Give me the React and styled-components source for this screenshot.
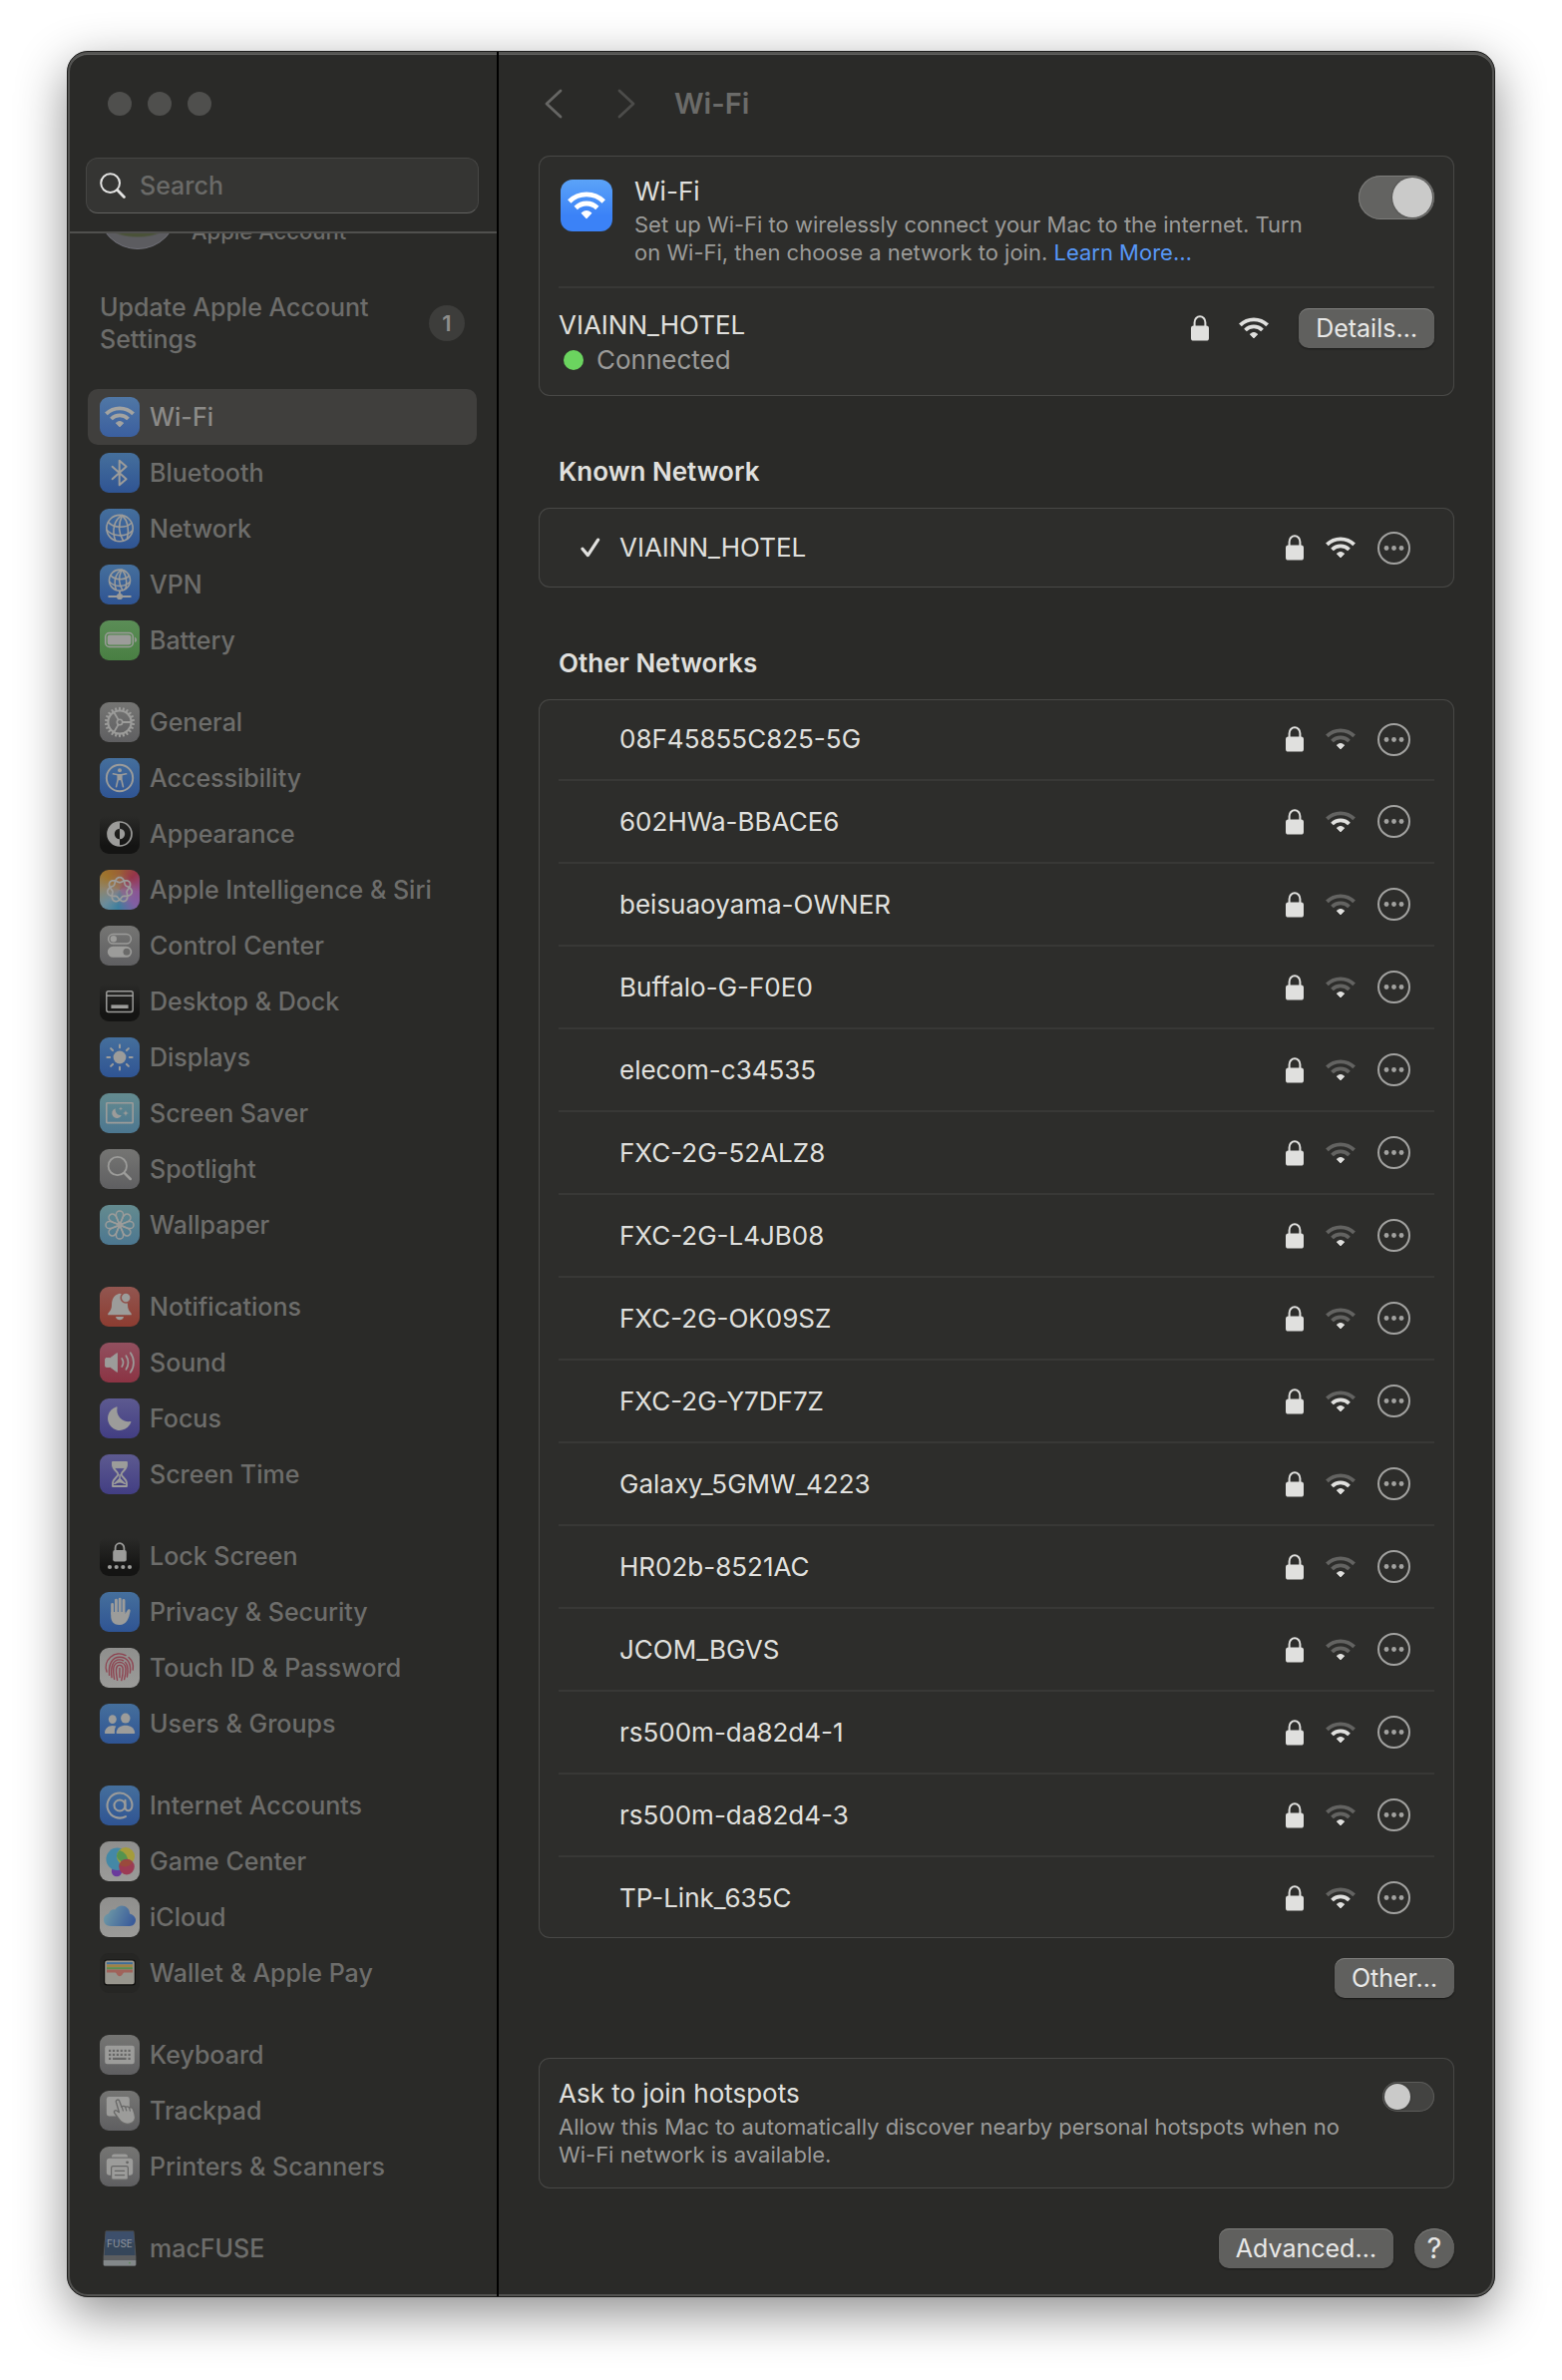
import React, { useState } from "react";
import styled, { createGlobalStyle } from "styled-components";

const c = {
  window: "#2a2a28",
  card: "#2d2d2b",
  cardLine: "#484846",
  rule: "#383836",
  text: "#e0e0de",
  muted: "#9b9b99",
  navText: "#6d6d6b",
  glyph: "#9c9c9a",
  button: "#60605e",
};

const tiles = {
  blue: "linear-gradient(#456f9c, #2f5493)",
  blueActive: "linear-gradient(#5077a5, #3b5f9f)",
  green: "linear-gradient(#5b8d57, #497f43)",
  gray: "linear-gradient(#757573, #5f5f61)",
  black: "linear-gradient(#2a2a28 5%, #141413 80%)",
  teal: "linear-gradient(#648b8f, #4c7790)",
  red: "linear-gradient(#925650, #8c3c31)",
  pink: "linear-gradient(#91505f, #8b3343)",
  indigo: "linear-gradient(#5d5a90, #423e83)",
  white: "linear-gradient(#8f8f8d, #9b9b99)",
  dark: "#262624",
  none: "transparent",
  siri:
    "radial-gradient(circle, rgba(140,120,125,0.7), rgba(140,120,125,0) 60%), conic-gradient(#9a6035, #96354a 45deg, #8b5594 95deg, #805fa2 135deg, #3b7f9f 185deg, #6b8c9b 225deg, #8f8468 275deg, #9e742c 315deg, #9a6035)",
};

const GlobalStyle = createGlobalStyle`
  *, *::before, *::after { box-sizing: border-box; }
  body {
    margin: 0;
    background: #ffffff;
    font-family: Inter, "Liberation Sans", sans-serif;
    font-size: 26px;
    line-height: 32px;
    color: ${c.text};
  }
  h1, h2, h3, p, ul { margin: 0; padding: 0; }
  ul { list-style: none; }
  button, input { font: inherit; color: inherit; margin: 0; }
  button { border: 0; padding: 0; background: none; }
  a { text-decoration: none; }
  svg { display: block; flex: none; }
`;

const Page = styled.div`
  padding: 51px 67px 83px;
`;

const Window = styled.div`
  display: flex;
  border: 1px solid #1c1c1b;
  border-radius: 21px;
  background: ${c.window};
  box-shadow: inset 0 0 0 2px #535351, inset 0 2px 0 1px #636361, 0 16px 50px rgba(0, 0, 0, 0.45);
  overflow: hidden;
`;

const Sidebar = styled.aside`
  flex: none;
  width: 432px;
  border-right: 2px solid #000000;
  font-size: 25px;
  font-weight: 500;
`;

const SidebarTop = styled.header`
  padding: 40px 18px 18px;
  border-bottom: 2px solid #50504e;
`;

const Lights = styled.div`
  display: flex;
  gap: 16px;
  padding-left: 22px;
  margin-bottom: 42px;
`;

const Light = styled.button`
  width: 24px;
  height: 24px;
  border-radius: 50%;
  background: #4f4f4d;
`;

const SearchBox = styled.label`
  display: flex;
  align-items: center;
  gap: 14px;
  height: 56px;
  padding: 0 13px;
  border: 1px solid #464644;
  border-bottom-color: #626260;
  border-radius: 12px;
  background: #353533;
`;

const SearchInput = styled.input`
  flex: 1;
  min-width: 0;
  border: 0;
  padding: 0;
  outline: 0;
  background: none;
  &::placeholder { color: #6a6a68; opacity: 1; }
`;

const Account = styled.a`
  display: flex;
  align-items: flex-end;
  gap: 14px;
  height: 16px;
  padding-left: 30px;
  overflow: hidden;
  color: ${c.navText};
  font-size: 22px;
  line-height: 22px;
`;

const Avatar = styled.span`
  flex: none;
  width: 80px;
  height: 80px;
  border: 1px solid #72727a;
  border-radius: 50%;
  background: radial-gradient(ellipse 26px 8px at 50% 76%, #4a5238 80%, transparent), #5c5c60;
`;

const AccountLabel = styled.span`
  padding-bottom: 7px;
`;

const Notice = styled.a`
  display: flex;
  align-items: center;
  justify-content: space-between;
  padding: 42px 32px 34px;
  color: ${c.navText};
`;

const NoticeText = styled.span`
  width: 290px;
`;

const Badge = styled.span`
  width: 36px;
  height: 36px;
  border-radius: 50%;
  background: #3d3d3b;
  color: #8e8e8c;
  font-size: 22px;
  font-weight: 600;
  line-height: 36px;
  text-align: center;
`;

const Nav = styled.nav`
  display: flex;
  flex-direction: column;
  gap: 26px;
  padding: 0 20px 20px;
`;

const NavLink = styled.a`
  display: flex;
  align-items: center;
  gap: 10px;
  height: 56px;
  padding: 0 12px;
  border-radius: 10px;
  background: ${(p) => (p.$active ? "#403f3d" : "transparent")};
  color: ${(p) => (p.$active ? "#8b8a88" : c.navText)};
  white-space: nowrap;
`;

const Tile = styled.span`
  display: flex;
  align-items: center;
  justify-content: center;
  flex: none;
  width: ${(p) => p.$size || 40}px;
  height: ${(p) => p.$size || 40}px;
  border-radius: ${(p) => (p.$size ? 12 : 9)}px;
  background: ${(p) => p.$fill};
`;

const Main = styled.main`
  flex: 1;
  min-width: 0;
  padding: 0 40px 28px;
`;

const Toolbar = styled.header`
  display: flex;
  align-items: center;
  gap: 33px;
  height: 104px;
`;

const History = styled.div`
  display: flex;
  gap: 43px;
`;

const HistoryButton = styled.button`
  display: flex;
  justify-content: center;
  width: 30px;
  color: ${(p) => (p.$dim ? "#4c4c4a" : "#666664")};
`;

const Title = styled.h1`
  font-size: 29px;
  font-weight: 600;
  line-height: 36px;
  color: #6b6b69;
`;

const Card = styled.section`
  padding: 0 20px;
  border-radius: 11px;
  background: ${c.card};
  box-shadow: inset 0 0 0 1px ${c.cardLine};
`;

const Info = styled.div`
  display: flex;
  align-items: flex-start;
  gap: 20px;
  padding: 20px 0;
  & + & { border-top: 2px solid ${c.rule}; }
`;

const InfoIcon = styled.div`
  display: flex;
  justify-content: center;
  width: 56px;
  padding-top: 4px;
`;

const InfoBody = styled.div`
  flex: 1;
  min-width: 0;
`;

const InfoTitle = styled.label`
  display: block;
`;

const NetworkName = styled.h3`
  font-size: 26px;
  font-weight: 400;
  line-height: 34px;
`;

const InfoText = styled.p`
  margin-top: 3px;
  padding-right: 20px;
  font-size: 22px;
  line-height: 28px;
  color: ${c.muted};
`;

const TextLink = styled.a`
  color: #5797f7;
`;

const Status = styled.p`
  display: flex;
  align-items: center;
  gap: 13px;
  margin-top: 2px;
  padding-left: 5px;
  color: ${c.muted};
`;

const Dot = styled.span`
  width: 20px;
  height: 20px;
  border-radius: 50%;
  background: #6bd45f;
`;

const InfoActions = styled.div`
  display: flex;
  align-items: center;
  gap: 30px;
`;

const Switch = styled.input`
  appearance: none;
  display: flex;
  flex: none;
  justify-content: ${(p) => (p.checked ? "flex-end" : "flex-start")};
  width: ${(p) => (p.$large ? 76 : 52)}px;
  height: ${(p) => (p.$large ? 44 : 30)}px;
  margin-top: ${(p) => (p.$large ? 0 : 4)}px;
  padding: 2px;
  border-radius: 22px;
  background: ${(p) => (p.checked ? "#636361" : "#434341")};
  box-shadow: inset 0 0 0 1px ${(p) => (p.checked ? "#7c7c7a" : "#5c5c5a")};
  &::before {
    content: "";
    width: ${(p) => (p.$large ? 40 : 26)}px;
    height: ${(p) => (p.$large ? 40 : 26)}px;
    border-radius: 50%;
    background: #cacac9;
    box-shadow: 0 0 2px rgba(0, 0, 0, 0.5);
  }
`;

const Button = styled.button`
  height: 40px;
  padding: 0 17px;
  border-radius: 10px;
  background: ${c.button};
  box-shadow: inset 0 1px 0 #7e7e7c, 0 1px 2px rgba(0, 0, 0, 0.45);
  color: #e8e8e7;
  font-size: 25px;
  line-height: 38px;
  white-space: nowrap;
`;

const HelpButton = styled(Button)`
  width: 40px;
  padding: 0;
  border-radius: 50%;
  font-size: 29px;
`;

const SectionTitle = styled.h2`
  padding: 60px 20px 20px;
  font-size: inherit;
  font-weight: 600;
`;

const NetworkRow = styled.li`
  display: flex;
  align-items: center;
  gap: 22px;
  height: 83px;
  padding-right: 24px;
  border-top: 2px solid ${c.rule};
  &:first-child { height: 80px; border-top: 0; }
`;

const Network = styled.span`
  display: flex;
  align-items: center;
  flex: 1;
  min-width: 0;
`;

const Mark = styled.span`
  flex: none;
  width: 61px;
  padding-left: 22px;
`;

const MoreButton = styled.button`
  width: 33px;
  height: 33px;
`;

const Actions = styled.div`
  display: flex;
  justify-content: flex-end;
  gap: 21px;
  padding: ${(p) => (p.$footer ? "40px 0 0" : "20px 0 60px")};
`;

/* ---------- glyphs ---------- */

const Wifi = ({ size = 30, level = 3, color = c.text, dim = "#636361" }) => (
  <svg width={size} height={(size * 22) / 30} viewBox="-15 -21.5 30 22" fill="none" aria-hidden="true">
    <path d="M-13.6 -13.6A19.3 19.3 0 0 1 13.6 -13.6" stroke={level > 2 ? color : dim} strokeWidth="3.8" />
    <path d="M-8.5 -8.5A12 12 0 0 1 8.5 -8.5" stroke={level > 1 ? color : dim} strokeWidth="3.8" />
    <path d="M0 -0.6L-3.7 -4.4Q0 -7.6 3.7 -4.4Z" fill={color} stroke={color} strokeWidth="1" strokeLinejoin="round" />
  </svg>
);

const Lock = () => (
  <svg width="18" height="26" viewBox="0 0 18 26" fill="none" aria-hidden="true">
    <path d="M3.6 11.5V7.2a5.4 5.9 0 0 1 10.8 0v4.3" stroke={c.text} strokeWidth="2" />
    <rect x="0" y="10.5" width="18" height="15" rx="2.6" fill={c.text} />
  </svg>
);

const More = () => (
  <svg width="33" height="33" viewBox="0 0 33 33" fill="none" aria-hidden="true">
    <circle cx="16.5" cy="16.5" r="15.5" stroke="#a2a2a0" strokeWidth="2" />
    <g fill="#a2a2a0">
      <circle cx="9" cy="16.5" r="2.4" />
      <circle cx="16.5" cy="16.5" r="2.4" />
      <circle cx="24" cy="16.5" r="2.4" />
    </g>
  </svg>
);

const Check = () => (
  <svg width="20" height="20" viewBox="0 0 20 20" fill="none" aria-hidden="true">
    <path d="M2 11.2L7.4 17.6L17.6 2.2" stroke={c.text} strokeWidth="3.2" strokeLinecap="round" strokeLinejoin="round" />
  </svg>
);

const Chevron = ({ flip }) => (
  <svg width="18" height="30" viewBox="0 0 18 30" fill="none" aria-hidden="true">
    <path
      d={flip ? "M2 2L16 15L2 28" : "M16 2L2 15L16 28"}
      stroke="currentColor" strokeWidth="2.8" strokeLinecap="round" strokeLinejoin="round"
    />
  </svg>
);

const Magnifier = () => (
  <svg width="26" height="26" viewBox="0 0 26 26" fill="none" stroke="#e4e4e3" aria-hidden="true">
    <circle cx="10.6" cy="10.6" r="9.4" strokeWidth="2" />
    <path d="M17.6 17.6L24.4 24.4" strokeWidth="2.8" strokeLinecap="round" />
  </svg>
);

const Svg = ({ children, stroke = c.glyph, fill = "none", width = 1.8 }) => (
  <svg
    width="40" height="40" viewBox="0 0 40 40" fill={fill} stroke={stroke}
    strokeWidth={width} strokeLinecap="round" strokeLinejoin="round" aria-hidden="true"
  >
    {children}
  </svg>
);

const Globe = () => (
  <>
    <circle cx="20" cy="19.6" r="13.2" />
    <path d="M22 6.6C14.5 11.5 12 21 15.5 31.6" />
    <path d="M22.5 6.6C18.5 15 18.5 24 23.5 32" />
    <path d="M22.5 6.6C28 12 29.5 21 27.5 30" />
    <path d="M8.6 13.6C14 19.5 26 20 31.8 14.2" />
    <path d="M7.2 21.5C13 28 26 29 32.6 22" />
  </>
);

const rosette = Array.from({ length: 181 }, (_, i) => {
  const t = (i / 180) * Math.PI * 4;
  const r = 9.9 + 2.6 * Math.cos(3.5 * t);
  return `${i ? "L" : "M"}${(20 + r * Math.sin(t)).toFixed(2)} ${(20 - r * Math.cos(t)).toFixed(2)}`;
}).join("");

const turns = (n) => Array.from({ length: n }, (_, i) => (360 / n) * i);

const glyphs = {
  bluetooth: <Svg width={2}><path d="M12.6 13.8L26.6 26.2L19.7 32.3V7.7L26.6 13.8L12.6 26.2" /></Svg>,
  network: <Svg width={1.6}><Globe /></Svg>,
  vpn: (
    <Svg width={1.6}>
      <g transform="translate(4 0) scale(0.8)" strokeWidth="1.9"><Globe /></g>
      <path d="M20 26.5V31M9.2 32H30.8" strokeWidth="1.9" />
      <circle cx="20" cy="32" r="2.3" fill={c.glyph} />
    </Svg>
  ),
  battery: (
    <Svg width={1.5}>
      <rect x="5.7" y="12.6" width="27.6" height="13.8" rx="4" />
      <rect x="8.4" y="15.2" width="22.2" height="8.6" rx="1.6" fill={c.glyph} />
      <path d="M35.6 17.4v4.2c1.4-.6 1.4-3.6 0-4.2z" fill={c.glyph} strokeWidth="0.8" />
    </Svg>
  ),
  general: (
    <Svg>
      <circle cx="20" cy="20" r="11.6" strokeWidth="2" />
      {turns(22).map((a) => (
        <path key={a} d="M20 7.4V5.8" strokeWidth="2" transform={`rotate(${a} 20 20)`} />
      ))}
      <circle cx="20" cy="20" r="2.7" strokeWidth="1.6" />
      {turns(3).map((a) => (
        <path key={a} d="M23 20H31" transform={`rotate(${a} 20 20)`} />
      ))}
    </Svg>
  ),
  accessibility: (
    <Svg>
      <circle cx="20" cy="20" r="13.2" strokeWidth="1.9" />
      <circle cx="20" cy="12.2" r="2" fill={c.glyph} stroke="none" />
      <path d="M13.4 15.8L18.2 16.8H21.8L26.6 15.8" strokeWidth="1.6" />
      <path d="M18.2 16.8H21.8V21.5L23.4 28.6M18.2 16.8V21.5L16.6 28.6M18.2 21.5H21.8" strokeWidth="1.6" />
      <path d="M18 17h4v5h-4z" fill={c.glyph} stroke="none" />
    </Svg>
  ),
  appearance: (
    <Svg>
      <circle cx="20" cy="20" r="12" strokeWidth="1.7" />
      <path d="M20 8a12 12 0 0 0 0 24v-6.8a5.2 5.2 0 0 1 0-10.4z" fill={c.glyph} stroke="none" />
      <path d="M20 14.8a5.2 5.2 0 0 1 0 10.4z" fill={c.glyph} stroke="none" />
    </Svg>
  ),
  siri: <Svg width={1.7}><path d={rosette} /></Svg>,
  control: (
    <Svg>
      <rect x="8.6" y="8.6" width="22.8" height="9.4" rx="4.7" strokeWidth="1.5" />
      <circle cx="13.8" cy="13.3" r="3.2" fill={c.glyph} stroke="none" />
      <path d="M13.3 20.8h13.4a5.5 5.5 0 0 1 0 11H13.3a5.5 5.5 0 0 1 0-11z" fill={c.glyph} stroke="none" />
      <circle cx="27" cy="26.3" r="3.5" fill="#6a6a69" stroke="none" />
    </Svg>
  ),
  desktop: (
    <Svg width={1.5}>
      <rect x="6.8" y="9.8" width="26.4" height="20.6" rx="1.8" />
      <path d="M7 14.2H33" />
      <rect x="11.4" y="23.4" width="17.2" height="3.6" fill={c.glyph} stroke="none" />
    </Svg>
  ),
  displays: (
    <Svg width={2}>
      <circle cx="20" cy="20" r="6.4" fill={c.glyph} stroke="none" />
      {turns(8).map((a) => (
        <path key={a} d="M20 10.2V7.4" transform={`rotate(${a} 20 20)`} />
      ))}
    </Svg>
  ),
  saver: (
    <Svg width={1.6}>
      <rect x="6.8" y="9.8" width="26.4" height="19.8" rx="0.6" />
      <path d="M15.8 15.2A5 5 0 1 0 21.8 22A5.4 5.4 0 0 1 15.8 15.2z" fill={c.glyph} stroke="none" />
      <path d="M26 17l.8 2.2 2.2.8-2.2.8-.8 2.2-.8-2.2-2.2-.8 2.2-.8zM21 13.4l.6 1.5 1.5.6-1.5.6-.6 1.5-.6-1.5-1.5-.6 1.5-.6z" fill={c.glyph} stroke="none" />
    </Svg>
  ),
  spotlight: (
    <Svg>
      <circle cx="17.8" cy="17" r="9.2" />
      <path d="M24.6 23.8L30.8 30" strokeWidth="2.5" />
    </Svg>
  ),
  wallpaper: (
    <Svg width={1.5}>
      {turns(8).map((a) => (
        <path key={a} d="M20 19C17.6 15 16.2 11.8 16.4 9.6a3.6 3.6 0 0 1 7.2 0C23.8 11.8 22.4 15 20 19z" transform={`rotate(${a} 20 20)`} />
      ))}
    </Svg>
  ),
  notifications: (
    <Svg fill={c.glyph} stroke="none">
      <path d="M8.2 28.2C7.6 26 12 24.8 12 18.6C12 12 14.6 8.2 18 7.4C19 6.4 21 6.4 22 7.4C25.4 8.2 28 12 28 18.6C28 24.8 32.4 26 31.8 28.2z" />
      <path d="M16 30h8c-.6 4.4-7.4 4.4-8 0z" />
      <circle cx="26.2" cy="11" r="5" stroke="#90504a" strokeWidth="1.6" />
    </Svg>
  ),
  sound: (
    <Svg width={1.7}>
      <path d="M6.4 15.6H10.6L17.4 10.6V29.4L10.6 24.4H6.4C5.8 24.4 5.6 24 5.6 23.6V16.4C5.6 16 5.8 15.6 6.4 15.6z" fill={c.glyph} strokeWidth="1" />
      <path d="M22.2 16C23.8 18.4 23.8 21.6 22.2 24M26.4 13.2C29.2 17.2 29.2 22.8 26.4 26.8M30.8 10.2C35 16 35 24 30.8 29.8" />
    </Svg>
  ),
  focus: (
    <Svg fill={c.glyph} stroke="none">
      <path d="M16.6 8.4A12 12 0 1 0 31.4 23.8C31.6 23.2 31 22.8 30.4 23A11.4 11.4 0 0 1 17.6 9.2C17.8 8.6 17.2 8.2 16.6 8.4z" />
    </Svg>
  ),
  hourglass: (
    <Svg width={1.8}>
      <path d="M13 8H27V11C27 15.5 21.6 17.4 21.6 20S27 24.5 27 29V32H13V29C13 24.5 18.4 22.6 18.4 20S13 15.5 13 11z" />
      <path d="M13 8H27V11L26 13.6H14L13 11zM20 20.5V24L25.8 29.5L14.2 29.5L20 24z" fill={c.glyph} strokeWidth="1" />
      <path d="M15 31C16 27.6 24 27.6 25 31z" fill="#47437f" stroke="none" />
    </Svg>
  ),
  lockscreen: (
    <Svg fill={c.glyph} stroke="none">
      <path d="M15.6 15V12a4.4 4.8 0 0 1 8.8 0v3" fill="none" stroke={c.glyph} strokeWidth="1.8" />
      <rect x="13.2" y="14" width="13.6" height="11.4" rx="2" />
      {[10, 16.7, 23.3, 30].map((x) => <circle key={x} cx={x} cy="31" r="2.1" />)}
    </Svg>
  ),
  privacy: (
    <Svg width={2.9}>
      <path d="M12.6 12.4V22M16.4 8.2V20M20.2 7.2V20M24 8.4V21" />
      <path d="M11.2 20H25.4V22L27.6 18.4C28.6 16.6 31 17.2 30.6 19C29.4 26 27 33 19.8 33C13 33 11.2 28.5 11.2 24z" fill={c.glyph} stroke="none" />
    </Svg>
  ),
  touchid: (
    <Svg stroke="#8e4350" width={1.4}>
      <path d="M7 24A13.4 13.4 0 0 1 26 7.6M29 9.6A13.4 13.4 0 0 1 33.2 22" />
      <path d="M9.6 27.4C8.4 16 12.6 9.2 20 9.2C28 9.2 31.6 16 30.4 25" />
      <path d="M12 29.6C10.8 20 12.4 11.9 20 11.9C21.4 11.9 22.6 12.2 23.6 12.8M25.6 14.4C28.8 18 28.4 24 27.4 29" />
      <path d="M14.6 31.4C14 27 13.4 24.4 13.8 20.6C14.6 12.6 25.2 12.4 26 20.6C26.2 24.6 25.6 28.4 24.6 31.6" />
      <path d="M17.6 32.4C16.8 28 16.2 24.6 16.6 20.8C17.2 16.2 22.8 16.4 23.2 20.8C23.4 25 22.8 29 21.8 32.6" />
      <path d="M20 20.4C20 24.6 19.8 26.6 20 29.6" />
    </Svg>
  ),
  users: (
    <Svg fill={c.glyph} stroke="none">
      <ellipse cx="12.8" cy="15.6" rx="4" ry="4.4" />
      <path d="M16.4 22.6C11 20.4 5.2 23.4 5 29C5 29.6 5.4 30 6 30H15C14.8 27 15 24.6 16.4 22.6z" />
      <ellipse cx="25.8" cy="14.6" rx="4.7" ry="5" />
      <path d="M16.6 29C17 19.2 34.6 19.2 35.2 29C35.2 29.6 34.8 30 34.2 30H17.6C17 30 16.6 29.6 16.6 29z" />
    </Svg>
  ),
  at: (
    <Svg>
      <g transform="translate(5.6 5.6) scale(1.2)" strokeWidth="1.7">
        <circle cx="12" cy="12" r="4.6" />
        <path d="M16.6 7.6V13.4C16.6 17.6 22.4 17.6 22.4 11.6A10.4 10.4 0 1 0 17 21.2" />
      </g>
    </Svg>
  ),
  game: (
    <Svg fill={c.glyph} stroke="none">
      <circle cx="17" cy="30" r="5.2" fill="#6a3a9c" />
      <circle cx="17.6" cy="17.8" r="11.2" fill="#4488a6" />
      <circle cx="26" cy="15" r="9" fill="#a59c3a" />
      <path d="M20 9a11.2 11.2 0 0 1 8.2 12A9 9 0 0 1 17 15a9 9 0 0 1 3-6z" fill="#55934f" />
      <circle cx="27" cy="25.6" r="7.8" fill="#9c3b54" />
      <path d="M19.6 23.6a9 9 0 0 0 13-2.4a7.8 7.8 0 0 0-13 2.4z" fill="#9a4a3c" />
    </Svg>
  ),
  cloud: (
    <Svg stroke="none">
      <defs>
        <linearGradient id="cloudFill" x1="0" x2="1" y1="0.4" y2="0.7">
          <stop offset="0" stopColor="#6f9aa6" />
          <stop offset="1" stopColor="#38599a" />
        </linearGradient>
      </defs>
      <path d="M11 29C6.8 29 4 26.4 4 22.8C4 19.4 6.4 17 9 16.6C9.4 13.4 12.6 11.4 15.2 12.4C20 5.4 30 8.6 30 16.4C33.6 17.4 36 20 36 22.8C36 26.4 33.4 29 30 29z" fill="url(#cloudFill)" />
    </Svg>
  ),
  wallet: (
    <Svg stroke="none">
      <rect x="4" y="6.4" width="32" height="26" rx="3" fill="#10100f" />
      <rect x="5.2" y="7.6" width="29.6" height="23.6" rx="2.2" fill="#97958d" />
      <path d="M7 9.2h26v2.2H7z" fill="#3f6d98" />
      <path d="M7 11.4h26v2.8H7z" fill="#a08246" />
      <path d="M7 14.2h26v2.2H7z" fill="#5c8c50" />
      <path d="M7 16.4h26v3.2h-8.6c-1.4 0-1.4 3.6-4.4 3.6s-3-3.6-4.4-3.6H7z" fill="#a0625a" />
    </Svg>
  ),
  keyboard: (
    <Svg stroke="none">
      <rect x="5.2" y="10.8" width="29.6" height="18.4" rx="2.2" fill={c.glyph} />
      <g fill="#666665">
        {[9, 12.9, 16.8, 20.7, 24.6, 28.5].map((x) => (
          <React.Fragment key={x}>
            <rect x={x} y="14.8" width="2.2" height="2.2" />
            <rect x={x} y="18.8" width="2.2" height="2.2" />
          </React.Fragment>
        ))}
        <rect x="9" y="22.8" width="2.2" height="2.2" />
        <rect x="13" y="22.8" width="13.6" height="2.2" />
        <rect x="28.5" y="22.8" width="2.2" height="2.2" />
      </g>
    </Svg>
  ),
  trackpad: (
    <Svg stroke="none">
      <rect x="6.8" y="6" width="23" height="19.4" rx="2.4" fill={c.glyph} />
      <path
        d="M16.4 11.4C15.8 9 19 8 19.8 10.4L22 16.4C23 15 25 15.2 25.6 16.4C27 15.4 28.8 15.8 29.4 17C31.2 16.2 33 17 33.6 18.8L35 23.4C37 29 34 32.6 29.6 33.2C24.6 34 21 31.4 18.6 27.6L14.8 22.4C13.6 20.4 15.6 18.8 17.4 20.2L19.4 21.6z"
        fill={c.glyph} stroke="#686867" strokeWidth="1.4"
      />
      <path d="M22.2 16.4L23.4 20M25.8 16.8L26.8 20M29.6 17.4L30.4 20.2" stroke="#686867" strokeWidth="1.2" />
    </Svg>
  ),
  printer: (
    <Svg stroke="none">
      <path d="M12 10.6C12 8.4 13 7.6 14.6 7.6H25.4C27 7.6 28 8.4 28 10.6z" fill={c.glyph} />
      <rect x="6.8" y="11.8" width="26.4" height="17" rx="3" fill={c.glyph} />
      <circle cx="27.6" cy="15.8" r="1.4" fill="#666665" />
      <rect x="11.6" y="19.6" width="16.8" height="13.6" rx="1.8" fill={c.glyph} stroke="#666665" strokeWidth="1.2" />
      <path d="M15.4 24.4H24.6M15.4 28.6H24.6" stroke="#666665" strokeWidth="1.3" />
    </Svg>
  ),
  fuse: (
    <Svg stroke="none">
      <path d="M5.6 3.4C5.7 2.6 6 2.4 6.6 2.4H33.4C34 2.4 34.3 2.6 34.4 3.4L36.4 28.6V36C36.4 37.2 36 37.6 35 37.6H5C4 37.6 3.6 37.2 3.6 36V28.6z" fill="#5c5e60" />
      <path d="M6.2 3.2H33.8L35.6 27H4.6z" fill="#35465a" />
      <path d="M6.2 3.2H33.8L34.6 14H5.4z" fill="#3d4f6b" />
      <path d="M3.8 32H36.2V36C36.2 37 36 37.4 35 37.4H5C4 37.4 3.8 37 3.8 36z" fill="#83888a" />
      <circle cx="30" cy="34.6" r="0.9" fill="#5c8a58" />
      <text x="20" y="19" fontSize="10" fontWeight="400" textAnchor="middle" fill="#8e949c" fontFamily="Inter, sans-serif">FUSE</text>
    </Svg>
  ),
};

/* ---------- data ---------- */

const groups = [
  [
    ["Wi-Fi", "blueActive", "wifi"],
    ["Bluetooth", "blue", "bluetooth"],
    ["Network", "blue", "network"],
    ["VPN", "blue", "vpn"],
    ["Battery", "green", "battery"],
  ],
  [
    ["General", "gray", "general"],
    ["Accessibility", "blue", "accessibility"],
    ["Appearance", "black", "appearance"],
    ["Apple Intelligence & Siri", "siri", "siri"],
    ["Control Center", "gray", "control"],
    ["Desktop & Dock", "black", "desktop"],
    ["Displays", "blue", "displays"],
    ["Screen Saver", "teal", "saver"],
    ["Spotlight", "gray", "spotlight"],
    ["Wallpaper", "teal", "wallpaper"],
  ],
  [
    ["Notifications", "red", "notifications"],
    ["Sound", "pink", "sound"],
    ["Focus", "indigo", "focus"],
    ["Screen Time", "indigo", "hourglass"],
  ],
  [
    ["Lock Screen", "black", "lockscreen"],
    ["Privacy & Security", "blue", "privacy"],
    ["Touch ID & Password", "white", "touchid"],
    ["Users & Groups", "blue", "users"],
  ],
  [
    ["Internet Accounts", "blue", "at"],
    ["Game Center", "white", "game"],
    ["iCloud", "white", "cloud"],
    ["Wallet & Apple Pay", "dark", "wallet"],
  ],
  [
    ["Keyboard", "gray", "keyboard"],
    ["Trackpad", "gray", "trackpad"],
    ["Printers & Scanners", "gray", "printer"],
  ],
  [["macFUSE", "none", "fuse"]],
];

const otherNetworks = [
  ["08F45855C825-5G", 1],
  ["602HWa-BBACE6", 2],
  ["beisuaoyama-OWNER", 1],
  ["Buffalo-G-F0E0", 1],
  ["elecom-c34535", 1],
  ["FXC-2G-52ALZ8", 1],
  ["FXC-2G-L4JB08", 1],
  ["FXC-2G-OK09SZ", 1],
  ["FXC-2G-Y7DF7Z", 2],
  ["Galaxy_5GMW_4223", 2],
  ["HR02b-8521AC", 1],
  ["JCOM_BGVS", 1],
  ["rs500m-da82d4-1", 2],
  ["rs500m-da82d4-3", 1],
  ["TP-Link_635C", 2],
];

const NetworkItem = ({ name, level, known }) => (
  <NetworkRow>
    <Network>
      <Mark>{known && <Check />}</Mark>
      {name}
    </Network>
    <Lock />
    <Wifi level={level} />
    <MoreButton type="button" aria-label={`More options for ${name}`}><More /></MoreButton>
  </NetworkRow>
);

export default function App() {
  const [wifiOn, setWifiOn] = useState(true);
  const [askHotspots, setAskHotspots] = useState(false);

  return (
    <Page>
      <GlobalStyle />
      <Window>
        <Sidebar>
          <SidebarTop>
            <Lights>
              <Light type="button" aria-label="Close" />
              <Light type="button" aria-label="Minimize" />
              <Light type="button" aria-label="Zoom" />
            </Lights>
            <SearchBox>
              <Magnifier />
              <SearchInput type="text" placeholder="Search" aria-label="Search" />
            </SearchBox>
          </SidebarTop>
          <Account href="#account">
            <Avatar />
            <AccountLabel>Apple Account</AccountLabel>
          </Account>
          <Notice href="#update">
            <NoticeText>Update Apple Account Settings</NoticeText>
            <Badge>1</Badge>
          </Notice>
          <Nav>
            {groups.map((group) => (
              <ul key={group[0][0]}>
                {group.map(([label, tile, icon]) => (
                  <li key={label}>
                    <NavLink href={`#${icon}`} $active={icon === "wifi"}>
                      <Tile $fill={tiles[tile]}>
                        {icon === "wifi" ? <Wifi color="#a3a3a1" /> : glyphs[icon]}
                      </Tile>
                      {label}
                    </NavLink>
                  </li>
                ))}
              </ul>
            ))}
          </Nav>
        </Sidebar>

        <Main>
          <Toolbar>
            <History>
              <HistoryButton type="button" aria-label="Back"><Chevron /></HistoryButton>
              <HistoryButton type="button" aria-label="Forward" $dim><Chevron flip /></HistoryButton>
            </History>
            <Title>Wi-Fi</Title>
          </Toolbar>

          <Card>
            <Info>
              <InfoIcon>
                <Tile $size={52} $fill="linear-gradient(#5ba3f8, #3b82f7 70%)">
                  <Wifi size={38} color="#ffffff" />
                </Tile>
              </InfoIcon>
              <InfoBody>
                <InfoTitle htmlFor="wifi-switch">Wi-Fi</InfoTitle>
                <InfoText>
                  Set up Wi-Fi to wirelessly connect your Mac to the internet. Turn on Wi-Fi, then choose a
                  network to join. <TextLink href="#learn">Learn More…</TextLink>
                </InfoText>
              </InfoBody>
              <Switch
                id="wifi-switch" type="checkbox" role="switch" $large
                checked={wifiOn} onChange={(e) => setWifiOn(e.target.checked)}
              />
            </Info>
            <Info>
              <InfoBody>
                <NetworkName>VIAINN_HOTEL</NetworkName>
                <Status><Dot />Connected</Status>
              </InfoBody>
              <InfoActions>
                <Lock />
                <Wifi />
                <Button type="button">Details…</Button>
              </InfoActions>
            </Info>
          </Card>

          <SectionTitle>Known Network</SectionTitle>
          <Card>
            <ul><NetworkItem name="VIAINN_HOTEL" level={3} known /></ul>
          </Card>

          <SectionTitle>Other Networks</SectionTitle>
          <Card>
            <ul>
              {otherNetworks.map(([name, level]) => (
                <NetworkItem key={name} name={name} level={level} />
              ))}
            </ul>
          </Card>
          <Actions><Button type="button">Other…</Button></Actions>

          <Card>
            <Info>
              <InfoBody>
                <InfoTitle htmlFor="hotspot-switch">Ask to join hotspots</InfoTitle>
                <InfoText>
                  Allow this Mac to automatically discover nearby personal hotspots when no Wi-Fi network
                  is available.
                </InfoText>
              </InfoBody>
              <Switch
                id="hotspot-switch" type="checkbox" role="switch"
                checked={askHotspots} onChange={(e) => setAskHotspots(e.target.checked)}
              />
            </Info>
          </Card>
          <Actions $footer>
            <Button type="button">Advanced…</Button>
            <HelpButton type="button" aria-label="Help">?</HelpButton>
          </Actions>
        </Main>
      </Window>
    </Page>
  );
}
